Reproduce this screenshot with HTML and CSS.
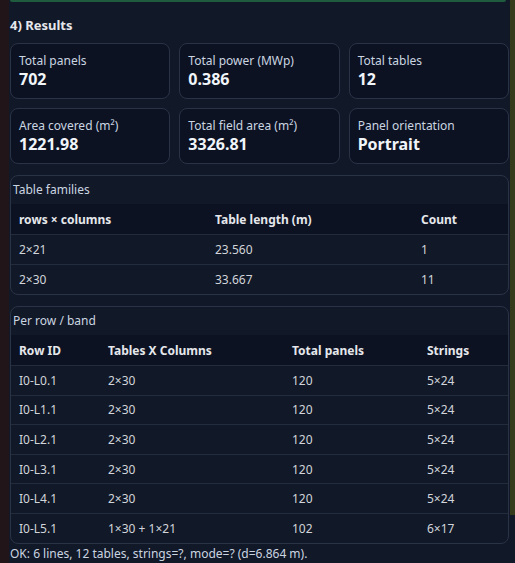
FILE: index.html
```html
<!DOCTYPE html>
<html>
<head>
<meta charset="utf-8">
<link rel="stylesheet" href="styles.css">
</head>
<body>
<div class="page">
  <div class="left-strip"></div>
  <main class="main">
    <div class="green-bar"></div>
    <h3 class="title">4) Results</h3>
    <div class="cards">
      <div class="card"><div class="label">Total panels</div><div class="value">702</div></div>
      <div class="card"><div class="label">Total power (MWp)</div><div class="value">0.386</div></div>
      <div class="card"><div class="label">Total tables</div><div class="value">12</div></div>
      <div class="card"><div class="label">Area covered (m²)</div><div class="value">1221.98</div></div>
      <div class="card"><div class="label">Total field area (m²)</div><div class="value">3326.81</div></div>
      <div class="card"><div class="label">Panel orientation</div><div class="value">Portrait</div></div>
    </div>
    <section class="box">
      <div class="box-title">Table families</div>
      <table class="tbl fam">
        <thead><tr><th>rows × columns</th><th>Table length (m)</th><th>Count</th></tr></thead>
        <tbody>
          <tr><td>2×21</td><td>23.560</td><td>1</td></tr>
          <tr><td>2×30</td><td>33.667</td><td>11</td></tr>
        </tbody>
      </table>
    </section>
    <section class="box">
      <div class="box-title">Per row / band</div>
      <table class="tbl rows">
        <thead><tr><th>Row ID</th><th>Tables X Columns</th><th>Total panels</th><th>Strings</th></tr></thead>
        <tbody>
          <tr><td>I0-L0.1</td><td>2×30</td><td>120</td><td>5×24</td></tr>
          <tr><td>I0-L1.1</td><td>2×30</td><td>120</td><td>5×24</td></tr>
          <tr><td>I0-L2.1</td><td>2×30</td><td>120</td><td>5×24</td></tr>
          <tr><td>I0-L3.1</td><td>2×30</td><td>120</td><td>5×24</td></tr>
          <tr><td>I0-L4.1</td><td>2×30</td><td>120</td><td>5×24</td></tr>
          <tr><td>I0-L5.1</td><td>1×30 + 1×21</td><td>102</td><td>6×17</td></tr>
        </tbody>
      </table>
    </section>
    <div class="status">OK: 6 lines, 12 tables, strings=?, mode=? (d=6.864 m).</div>
  </main>
  <div class="right-strip"></div>
</div>
</body>
</html>
```
FILE: styles.css
```css
html, body {
  margin: 0;
  padding: 0;
  background: #111827;
  height: 563px;
  overflow: hidden;
}
body {
  font-family: "Noto Sans", "Open Sans", sans-serif;
  color: #e5e7eb;
}
.page {
  display: flex;
  height: 563px;
}
.left-strip {
  width: 9px;
  flex: none;
  background: #211519;
}
.right-strip {
  width: 5px;
  height: 515px;
  flex: none;
  background: #363c1b;
}
.main {
  flex: 1;
  padding: 0 1px 0 1px;
  background: #111827;
  min-width: 0;
}
.green-bar {
  height: 2px;
  margin-right: 3px;
  background: #1f5b3e;
  border-radius: 0 0 4px 4px;
}
.title {
  margin: 15px 0 0 0;
  font-size: 13px;
  font-weight: 700;
  line-height: 17px;
  color: #e5e7eb;
}
.cards {
  display: grid;
  grid-template-columns: 1fr 1fr 1fr;
  gap: 9px;
  margin-top: 9px;
}
.card {
  height: 56px;
  box-sizing: border-box;
  border: 1px solid #2a3346;
  border-radius: 8px;
  background: #0c1222;
  padding: 9px 8px 7px 8px;
}
.label {
  font-size: 12px;
  line-height: 16px;
  color: #cbd5e1;
}
.value {
  font-size: 16px;
  font-weight: 700;
  line-height: 21px;
  color: #f1f5f9;
}
.box {
  margin-top: 11px;
  border: 1px solid #2a3346;
  border-radius: 8px;
  background: #111827;
  overflow: hidden;
}
.box + .box { margin-top: 11px; }
.box-title {
  font-size: 12px;
  line-height: 16px;
  padding: 6px 2px 6px 2px;
  color: #cbd5e1;
}
.tbl {
  width: 100%;
  border-collapse: collapse;
  font-size: 12px;
}
.tbl th {
  text-align: left;
  font-weight: 700;
  color: #e5e7eb;
  background: #0c1222;
  padding: 0 8px;
  height: 30px;
}
.tbl td {
  padding: 0 8px;
  height: 29px;
  color: #d1d5db;
  border-top: 1px solid #232c3d;
}
.rows td { height: 28.6px; }
.fam th:nth-child(1) { width: 180px; }
.fam th:nth-child(2) { width: 190px; }
.rows th:nth-child(1) { width: 73px; }
.rows th:nth-child(2) { width: 168px; }
.rows th:nth-child(3) { width: 119px; }
.status {
  font-size: 12px;
  line-height: 16px;
  margin-top: 2px;
  color: #cbd5e1;
}
```
